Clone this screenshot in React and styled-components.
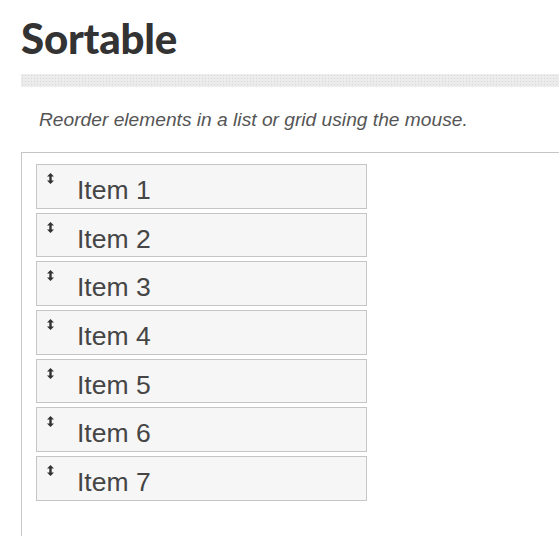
import styled, { createGlobalStyle } from "styled-components";

const GlobalStyle = createGlobalStyle`
  html, body {
    margin: 0;
    padding: 0;
    background: #ffffff;
    overflow: hidden;
  }
`;

const Page = styled.div`
  width: 559px;
  height: 536px;
  padding-left: 21px;
  box-sizing: border-box;
  overflow: hidden;
`;

const Title = styled.h1`
  margin: 0;
  padding-top: 14px;
  font-family: "Lato", "Noto Sans", sans-serif;
  font-weight: 900;
  font-size: 42px;
  line-height: 48px;
  color: #333333;
  letter-spacing: -0.2px;
`;

const Separator = styled.div`
  margin-top: 12px;
  height: 13px;
  background-color: #ececec;
  background-image: radial-gradient(#d6d6d6 0.7px, transparent 0.9px);
  background-size: 3px 3px;
`;

const Description = styled.p`
  margin: 0;
  padding: 22px 0 0 18px;
  height: 43px;
  font-family: "Liberation Sans", Arial, sans-serif;
  font-style: italic;
  font-size: 19.2px;
  line-height: 22px;
  color: #555555;
`;

const Demo = styled.div`
  border-top: 1px solid #c5c5c5;
  border-left: 1px solid #c5c5c5;
  padding: 11px 0 0 14px;
  height: 400px;
`;

const SortList = styled.ul`
  list-style: none;
  margin: 0;
  padding: 0;
  width: 331px;
`;

const SortItem = styled.li`
  display: flex;
  align-items: flex-start;
  box-sizing: border-box;
  height: 44.67px;
  margin-bottom: 4px;
  background: #f6f6f6;
  border: 1px solid #c5c5c5;
  font-family: "Liberation Sans", Arial, sans-serif;
  font-size: 26.5px;
  color: #454545;
`;

const Handle = styled.svg`
  flex: none;
  margin: 8px 0 0 10px;
`;

const Label = styled.span`
  margin-left: 23px;
  line-height: 26px;
  padding-top: 12px;
`;

const ArrowUpDown = () => (
  <Handle width="7" height="11" viewBox="0 0 7 11">
    <path d="M3.5 0 L7 3.6 H4.7 V7.4 H7 L3.5 11 L0 7.4 H2.3 V3.6 H0 Z" fill="#333333" />
  </Handle>
);

const items = ["Item 1", "Item 2", "Item 3", "Item 4", "Item 5", "Item 6", "Item 7"];

export default function App() {
  return (
    <>
      <GlobalStyle />
      <Page>
        <Title>Sortable</Title>
        <Separator />
        <Description>Reorder elements in a list or grid using the mouse.</Description>
        <Demo>
          <SortList>
            {items.map((item) => (
              <SortItem key={item}>
                <ArrowUpDown />
                <Label>{item}</Label>
              </SortItem>
            ))}
          </SortList>
        </Demo>
      </Page>
    </>
  );
}
